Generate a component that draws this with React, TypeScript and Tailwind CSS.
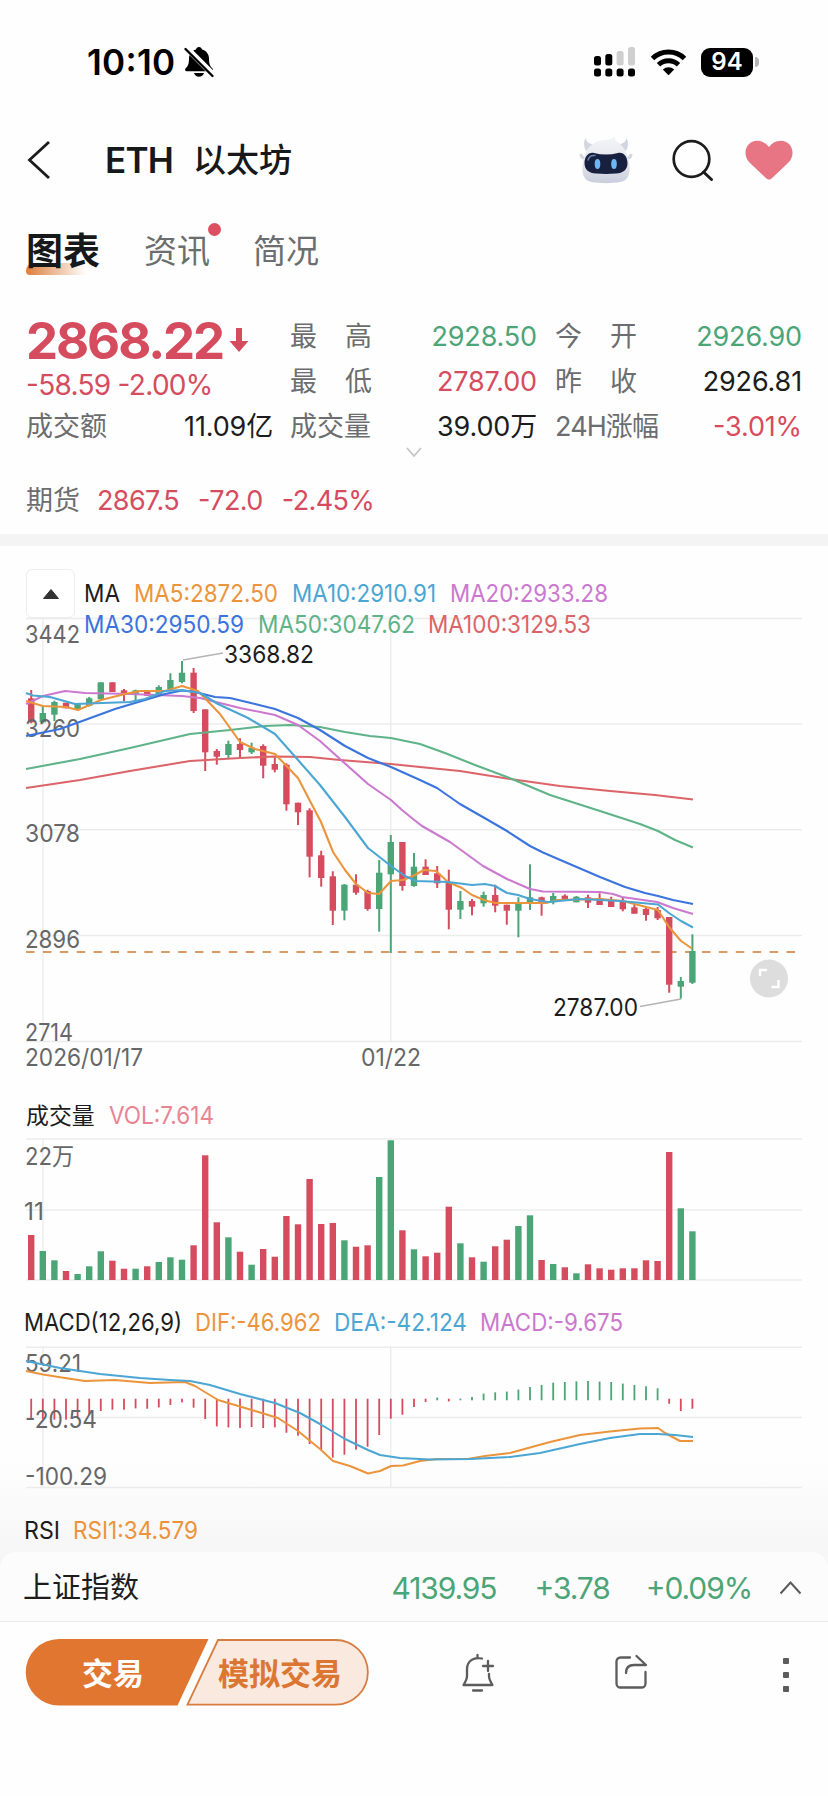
const RED = '#d64c5f';
const GREEN = '#4ba577';

// x of the i-th bar, shared by all three charts
const barX = (i: number) => 31.2 + i * 11.6;

// [rising, high, open/close top, open/close bottom, low]
const candles: [number, number, number, number, number][] = [
  [0, 690, 698.3, 722.3, 723.3],
  [1, 705.7, 713, 722.3, 723.3],
  [1, 700.7, 702, 714.7, 721],
  [0, 702.7, 702.7, 708.3, 708.3],
  [1, 704, 704, 710, 710],
  [1, 697, 698.3, 705.7, 706.5],
  [1, 682.3, 682.3, 699.3, 699.3],
  [0, 682.3, 682.3, 692, 692],
  [0, 689, 690.3, 694.7, 701.3],
  [1, 689.7, 690.3, 694.7, 700],
  [0, 691, 691, 695.7, 695.7],
  [1, 685.3, 687, 695.3, 696],
  [1, 673.3, 680, 689, 691],
  [1, 661, 672.7, 682, 683.3],
  [0, 668, 672.7, 711, 713],
  [0, 709.3, 709.3, 752.3, 771],
  [0, 749, 751, 756.7, 764.7],
  [1, 740.7, 744, 755, 759],
  [0, 738.3, 744, 750, 757.3],
  [1, 742.7, 747.7, 752.3, 754],
  [0, 744.3, 746, 765.7, 778.3],
  [0, 757.3, 764, 769.7, 772.3],
  [0, 763.3, 764.7, 804.3, 810.7],
  [0, 802.7, 802.7, 812.3, 825],
  [0, 808.3, 810.3, 856.7, 877.3],
  [0, 850.7, 855.3, 878, 886.7],
  [0, 871.3, 876.3, 910.7, 925],
  [1, 884, 884.7, 910.7, 920.3],
  [0, 874.3, 884.7, 892.7, 894.7],
  [0, 889.7, 891, 909, 910.7],
  [1, 860, 872.7, 909, 931.7],
  [1, 835, 842, 874.3, 953],
  [0, 842, 842, 886, 890.7],
  [1, 853, 866.7, 886, 886.7],
  [0, 859.3, 866.7, 875, 875],
  [0, 866, 873.3, 883.3, 888],
  [0, 869.7, 883, 909.7, 929.3],
  [1, 891, 901, 909.7, 919],
  [0, 899, 901, 906.7, 915.3],
  [1, 891.7, 895, 903.3, 906.7],
  [0, 884.7, 895, 905.7, 912.3],
  [0, 904.7, 904.7, 910.7, 924.7],
  [1, 897.3, 903.3, 910.7, 937.3],
  [1, 864.3, 897.3, 903.3, 910],
  [0, 896.7, 897.3, 902.7, 915.7],
  [1, 893, 896, 902.3, 904.3],
  [0, 894.3, 895.7, 899.7, 899.7],
  [1, 896, 896.7, 902.3, 902.3],
  [0, 894.7, 897.3, 902.7, 908],
  [0, 893.3, 898, 905, 905],
  [0, 896.7, 900.3, 907, 907],
  [0, 898, 901.7, 909.3, 911.3],
  [0, 905, 907.3, 913.7, 913.7],
  [0, 907, 909, 915, 920.7],
  [0, 907, 910, 918.3, 920],
  [0, 917, 917, 984.7, 992.7],
  [1, 977, 981, 986.7, 998.7],
  [1, 934.3, 951, 982.7, 984],
];

// bar heights in px
const volumes = [
  45, 29, 19.7, 9, 6, 13.7, 28.7, 19.3, 11.3, 11.3, 13.7, 18, 22.7, 20.3, 34.7, 124.7, 57.7, 42.7,
  28.3, 15.3, 31, 23.3, 64, 55.7, 101, 56, 57, 39.7, 33.3, 34.7, 103, 139.7, 49.7, 30.7, 23.7, 27.3,
  73.3, 36.7, 22.7, 18.3, 33.7, 40.3, 54, 64.7, 20, 16, 12.7, 6.7, 15.7, 11.7, 10.3, 11.7, 11.7,
  19.7, 19, 128, 71.7, 48.7,
];

const macd = [
  -20, -20.5, -21, -21, -19, -15.7, -12.3, -11, -11, -9.7, -10, -8.7, -6.3, -3.7, -9, -20.3, -27.7,
  -28.7, -29.3, -28.3, -29.3, -28.7, -34, -37, -45.3, -51.7, -59, -56, -51, -48, -36.3, -20, -16,
  -8.3, -3.3, 2.7, -2.7, 1.7, 3.3, 6.7, 8, 8.7, 10.7, 13.3, 15.3, 17.7, 18.3, 19, 19.3, 18.7, 18.3,
  16.7, 15.3, 14, 12, -5, -12.3, -10,
];

const averages = [
  {
    color: '#db6468',
    points:
      '26,788 80,780 130,771 190,761 240,758 275,756.5 310,757 340,760 391,764 420,767 460,771 510,779 560,786 610,791 655,795 693,799.5',
  },
  {
    color: '#5fb388',
    points:
      '26,769 80,759 130,748 190,734 230,730 265,726 290,725 320,727 345,732 370,736 391,738 420,744 445,753 475,765 512,779 550,795 600,811 640,824 658,831 675,840 693,847.5',
  },
  {
    color: '#cb78cf',
    points:
      '26,704 43,696 65,691 85,693 130,694 182,696 200,698 240,708 275,715 298,725 320,741 340,759 368,784 391,800 402,810 413,819 422,826 450,842 483,866 507,879 530,889 543,891.5 600,892 613,894 622,897 657,902 673,908 693,914',
  },
  {
    color: '#3b74dc',
    points:
      '26,736 60,729 85,720 115,709 145,700 165,694 182,690.5 195,692 215,697 230,698 255,704 275,709 298,718 320,730 345,746 368,758 391,767 420,780 437,788 460,804 488,820 507,831 530,846 543,852.5 565,862 600,877 625,887 645,893 658,896 673,900 693,904',
  },
  {
    color: '#eb943c',
    points:
      '26,701 42.7,706 66,707 78,710 101,700 125,694 140,691 165,691 182,686 198,691 220,714 240,742 255,749 275,754 298,778 321,822 333,852 345,870 356,884 368,893 379,894 391,881 403,880 413,876 424,870 436,871 448,882 462,888 472,895 484,900 495,903 546,903 558,900 600,899 623,901 646,907 658,910 669,927 681,941 692,948.5',
  },
  {
    color: '#4ba6d3',
    points:
      '26,693 33,695.5 50,697 75,704 130,702 145,699 165,691 182,690 200,693 218,704 248,718 275,734 298,760 320,785 345,817 368,848 391,866 405,876 416,881 448,882 472,885 485,884 495,886 507,893 518,895 530,899 548,902 580,899 620,901 658,904.5 669,913 681,921 693,927.5',
  },
];

const difPoints =
  '26,1371 43,1374.5 65,1378 85,1381 115,1380 150,1383 185,1382 195,1386 218,1400 235,1405 255,1411 278,1418 298,1431 320,1449 333,1461 350,1466 368,1473.5 380,1471 391,1466 403,1465.5 420,1461 437,1459 468,1459 485,1456 510,1453 550,1442 580,1435 610,1431.5 640,1428.5 658,1428 665,1433 680,1441 693,1441';
const deaPoints =
  '26,1361 60,1368 100,1374 140,1378 170,1380 190,1381 210,1385 240,1394 275,1403 300,1413 320,1424 345,1439 368,1450 380,1455 400,1458 430,1459.5 470,1459 510,1457 540,1453 580,1444 610,1438 640,1434 658,1434 675,1435 693,1437';

function Grid({ rows, top, bottom }: { rows: number[]; top: number; bottom: number }) {
  return (
    <g stroke="#ececec" strokeWidth="1.4">
      {rows.map((y) => (
        <line key={y} x1="26" x2="802" y1={y} y2={y} />
      ))}
      <line x1="43" x2="43" y1={top} y2={bottom} />
      <line x1="390.7" x2="390.7" y1={top} y2={bottom} />
    </g>
  );
}

type LabelProps = { x: number; y: number; w: number; color?: string; children: string };

function Label({ x, y, w, color = '#666769', children }: LabelProps) {
  return (
    <text x={x} y={y} textLength={w} lengthAdjust="spacingAndGlyphs" fontSize="24" fill={color}>
      {children}
    </text>
  );
}

function StatusBar() {
  return (
    <div className="flex h-[100px] items-center pt-6 pl-[87px] pr-[69px]">
      <span className="text-[35px] leading-none font-semibold tracking-[0.3px] text-black">10:10</span>
      <svg className="ml-[8px]" width="32" height="32" viewBox="0 0 32 32">
        <path
          d="M16 1c1.6 0 2.7 1 3 2.4 4.500 1.200 7 4.800 7 9.200 0 5.700 1.200 7.700 3.300 9.700 1.200 1.200.6 3-1 3H3.700c-1.600 0-2.200-1.800-1-3C4.800 20.300 6 18.300 6 12.600c0-4.400 2.500-8 7-9.200C13.300 2 14.400 1 16 1zM11 27h10c-.6 2.400-2.600 3.800-5 3.800S11.600 29.400 11 27z"
          fill="#000"
        />
        <path d="M3 1.500l27.500 27.500" stroke="#fff" strokeWidth="6" />
        <path d="M2.500 3l27 27" stroke="#000" strokeWidth="2.400" strokeLinecap="round" />
      </svg>
      <svg className="ml-auto" width="42" height="30" viewBox="0 0 42 30">
        <g fill="#000">
          <rect x="0" y="9" width="7" height="9.500" rx="2.500" />
          <rect x="11.300" y="7" width="7" height="11.500" rx="2.500" />
          {[0, 11.3, 22.6, 34].map((x) => (
            <rect key={x} x={x} y="21.500" width="7" height="8" rx="2.500" />
          ))}
        </g>
        <rect x="22.600" y="4" width="7" height="14.500" rx="2.500" fill="#cfcfcf" />
        <rect x="34" y="0" width="7" height="18.500" rx="2.500" fill="#cfcfcf" />
      </svg>
      <svg className="ml-[14px]" width="37" height="28" viewBox="0 0 37 28">
        <g fill="none" stroke="#000" strokeWidth="5">
          <path d="M2.500 10.500a23 23 0 0 1 32 0" />
          <path d="M8.500 16.800a14.500 14.500 0 0 1 20 0" />
        </g>
        <path d="M12.800 21.500a8.500 8.500 0 0 1 11.400 0L18.500 27.300z" fill="#000" />
      </svg>
      <div className="ml-[14px] flex items-center">
        <div className="flex h-[29px] w-[52px] items-center justify-center rounded-[9px] bg-black text-[24px] leading-none font-semibold text-white">
          94
        </div>
        <div className="ml-0.5 h-[10px] w-1 rounded-r-full bg-[#b5b5b5]" />
      </div>
    </div>
  );
}

function Robot() {
  return (
    <svg width="54" height="48" viewBox="0 0 54 48">
      <defs>
        <linearGradient id="shell" x1="0" y1="0" x2="0" y2="1">
          <stop offset="0" stopColor="#f4f5f8" />
          <stop offset=".6" stopColor="#e3e5ec" />
          <stop offset="1" stopColor="#c9cddd" />
        </linearGradient>
      </defs>
      <path d="M7 15C4.500 10 4.500 6 6.500 2c1 4 3 5.500 8 6.500zM47 15c2.500-5 2.500-9 .5-13-1 4-3 5.500-8 6.500z" fill="#d3d6e0" />
      <path d="M2 18c0 3 1 4 4 4M52 18c0 3-1 4-4 4" fill="none" stroke="#d4d7e0" strokeWidth="3" />
      <path
        d="M27 4c4-.5 7-1.500 9-4-.3 3 .3 4.500 1.800 5.800C45 10 49 18 50.500 30c.8 9-2 14.500-9 16-9 1.500-20 1.500-29 0C5.500 44.500 2.700 39 3.500 30 5 18 9 10 16 6.500 19 5 23 4 27 4z"
        fill="url(#shell)"
      />
      <path d="M15 17c8 2 16 2 24 0 5.500-1.300 9.500 4 9.500 10 0 7-4.500 10-11.500 10.600-7 .6-13 .6-20 0C10 37 5.500 34 5.500 27c0-6 4-11.300 9.500-10z" fill="#17203f" />
      <path d="M9 24c1-3.500 3.500-5 7-4.500" fill="none" stroke="#6b83ad" strokeWidth="1.500" strokeLinecap="round" />
      <ellipse cx="18.500" cy="28" rx="2.800" ry="5" fill="#6db7f5" />
      <ellipse cx="35" cy="28" rx="2.800" ry="5" fill="#6db7f5" />
    </svg>
  );
}

function Header() {
  return (
    <header className="flex h-[120px] items-center pl-[27px] pr-[35px]">
      <svg width="24" height="40" viewBox="0 0 24 40">
        <path d="M22 2L2.500 20 22 38" fill="none" stroke="#1c1c1c" strokeWidth="2.800" />
      </svg>
      <h1 className="ml-[54px] flex items-center text-[#17181a]">
        <span className="text-[35px] leading-none font-semibold tracking-[-0.8px]">ETH</span>
        <span className="ml-[20px] text-[33px] leading-none font-medium">以太坊</span>
      </h1>
      <div className="ml-auto flex items-center">
        <Robot />
        <svg className="ml-[39px]" width="42" height="43" viewBox="0 0 42 43">
          <circle cx="19.500" cy="20" r="17.800" fill="none" stroke="#1c1c1c" strokeWidth="2.700" />
          <path d="M31.500 33l8 7.500" stroke="#1c1c1c" strokeWidth="3" strokeLinecap="round" />
        </svg>
        <svg className="ml-[31px]" width="48" height="40" viewBox="0 0 48 40">
          <path
            d="M24 39.500c-1.300 0-2.300-.8-3.400-1.800L5 23C1.500 19.500.5 16 .5 12.500.5 6 5.500.8 12 .8c5 0 9 2.200 12 6.200 3-4 7-6.200 12-6.200 6.500 0 11.500 5.200 11.500 11.700 0 3.500-1 7-4.500 10.500L27.400 37.700c-1.100 1-2.100 1.800-3.400 1.800z"
            fill="#e87583"
          />
        </svg>
      </div>
    </header>
  );
}

function Tabs() {
  return (
    <nav className="flex h-[62px] items-center pl-[26px] text-[33px] leading-none text-[#6c6d6f]">
      <div className="relative">
        <div className="absolute -bottom-[5px] left-0 h-3 w-[60px] rounded-tl-lg rounded-bl-sm bg-gradient-to-r from-[#dd7e3c] to-transparent" />
        <span className="relative text-[37px] font-bold text-[#17181a]">图表</span>
      </div>
      <div className="relative ml-[44px]">
        资讯
        <div className="absolute -top-[12px] -right-[11px] size-[13px] rounded-full bg-[#dc4f60]" />
      </div>
      <span className="ml-[43px]">简况</span>
    </nav>
  );
}

function Stat({ label, value, tone, spread }: { label: string; value: string; tone: string; spread?: boolean }) {
  return (
    <div className="flex h-[45px] items-center justify-between">
      {spread ? (
        <span className="flex w-[82px] justify-between text-[#6c6d6f]">
          {label.split('').map((ch) => (
            <span key={ch}>{ch}</span>
          ))}
        </span>
      ) : (
        <span className={`text-[#6c6d6f] ${label.startsWith('24H') ? 'tracking-[-0.9px]' : ''}`}>{label}</span>
      )}
      <span className={`tracking-[-0.15px] ${tone}`}>{value}</span>
    </div>
  );
}

function Quote() {
  return (
    <section className="relative h-[252px] pt-[32px] pl-[26px] pr-[26px] text-[27px] leading-none whitespace-nowrap">
      <div className="flex">
        <div className="w-[247px]">
          <div className="flex h-[52px] items-center text-[#d64c5f]">
            <span className="text-[51px] font-bold tracking-[-2.1px]">2868.22</span>
            <svg className="ml-[6px]" width="20" height="26" viewBox="0 0 20 26">
              <path d="M7 1h6v13h6.500L10 25 .5 14H7z" fill="#d64c5f" />
            </svg>
          </div>
          <div className="flex h-[38px] items-center text-[28px] tracking-[-0.7px] text-[#d64c5f]">-58.59 -2.00%</div>
          <Stat label="成交额" value="11.09亿" tone="text-[#1c1c1c]" />
        </div>
        <div className="ml-[17px] w-[247px]">
          <Stat label="最高" value="2928.50" tone="text-[#4ba577]" spread />
          <Stat label="最低" value="2787.00" tone="text-[#d64c5f]" spread />
          <Stat label="成交量" value="39.00万" tone="text-[#1c1c1c]" />
        </div>
        <div className="ml-[18px] flex-1">
          <Stat label="今开" value="2926.90" tone="text-[#4ba577]" spread />
          <Stat label="昨收" value="2926.81" tone="text-[#1c1c1c]" spread />
          <Stat label="24H涨幅" value="-3.01%" tone="text-[#d64c5f]" />
        </div>
      </div>
      <svg className="mx-auto -mt-0.5 block" width="16" height="11" viewBox="0 0 16 11">
        <path d="M1 1l7 8 7-8" fill="none" stroke="#c4c4c4" strokeWidth="1.800" />
      </svg>
      <div className="mt-[29px] flex items-center tracking-[-0.6px] text-[#d64c5f]">
        <span className="tracking-normal text-[#6c6d6f]">期货</span>
        <span className="ml-[17px]">2867.5</span>
        <span className="ml-[19px]">-72.0</span>
        <span className="ml-[19px]">-2.45%</span>
      </div>
    </section>
  );
}

function PriceChart() {
  return (
    <section className="relative h-[534px]">
      <svg className="block" width="828" height="534" viewBox="0 546 828 534">
        <Grid rows={[618.5, 724, 829.7, 935.5, 1041.5]} top={618.5} bottom={1041.5} />
        <line x1="26" x2="802" y1="952" y2="952" stroke="#da9a63" strokeWidth="1.800" strokeDasharray="8.500 8.400" />
        {candles.map(([up, high, top, bottom, low], i) => (
          <g key={i} fill={up ? GREEN : RED}>
            <rect x={barX(i) - 1} y={high} width="2" height={low - high} />
            <rect x={barX(i) - 3.2} y={top} width="6.400" height={bottom - top} />
          </g>
        ))}
        <Label x={25} y={643} w={55}>3442</Label>
        <Label x={25} y={736.5} w={55}>3260</Label>
        <Label x={25} y={842} w={55}>3078</Label>
        <Label x={25} y={947.5} w={55}>2896</Label>
        <Label x={25} y={1041} w={48}>2714</Label>
        <Label x={25} y={1066} w={118}>2026/01/17</Label>
        <Label x={361} y={1066} w={60}>01/22</Label>
        {averages.map((line) => (
          <polyline key={line.color} points={line.points} fill="none" stroke={line.color} strokeWidth="2.100" strokeLinejoin="round" />
        ))}
        <path d="M183 660l40-7M640 1006.500l41-7.500" stroke="#b4b4b4" strokeWidth="1.500" />
        <Label x={224} y={662.5} w={90} color="#1c1c1c">3368.82</Label>
        <Label x={553} y={1015.5} w={85} color="#1c1c1c">2787.00</Label>
        <circle cx="769" cy="978.500" r="19" fill="#dddddd" />
        <path d="M760 976v-6h7M778.500 980v7h-7" fill="none" stroke="#fff" strokeWidth="2.400" />
      </svg>
      <div className="absolute top-[23px] left-[26px] flex size-[49px] items-center justify-center rounded-md border border-[#ededed] bg-white">
        <svg width="16" height="10" viewBox="0 0 16 10">
          <path d="M8 .5L15.500 9.500H.5z" fill="#333" stroke="#333" strokeLinejoin="round" />
        </svg>
      </div>
      <svg className="absolute top-[30px] left-0" width="828" height="64" viewBox="0 576 828 64">
        <Label x={84} y={602} w={36} color="#1c1c1c">MA</Label>
        <Label x={134} y={602} w={144} color="#eb943c">MA5:2872.50</Label>
        <Label x={292} y={602} w={144} color="#4ba6d3">MA10:2910.91</Label>
        <Label x={450} y={602} w={158} color="#cb78cf">MA20:2933.28</Label>
        <Label x={84} y={632.5} w={160} color="#3b74dc">MA30:2950.59</Label>
        <Label x={258} y={632.5} w={157} color="#5fb388">MA50:3047.62</Label>
        <Label x={428} y={632.5} w={163} color="#db6468">MA100:3129.53</Label>
      </svg>
    </section>
  );
}

function VolumeChart() {
  return (
    <section>
      <svg className="block" width="828" height="220" viewBox="0 1080 828 220">
        <text x="26" y="1123.500" fontSize="22.900" fill="#1c1c1c">成交量</text>
        <Label x={109} y={1123.5} w={105} color="#e88592">VOL:7.614</Label>
        <Grid rows={[1139, 1210, 1280]} top={1139} bottom={1280} />
        <Label x={25} y={1164.5} w={49}>22万</Label>
        <Label x={24} y={1220} w={20}>11</Label>
        {volumes.map((h, i) => (
          <rect key={i} x={barX(i) - 3.2} y={1280 - h} width="6.400" height={h} fill={candles[i][0] ? GREEN : RED} />
        ))}
      </svg>
    </section>
  );
}

function MacdChart() {
  return (
    <section>
      <svg className="block" width="828" height="252" viewBox="0 1300 828 252">
        <defs>
          <linearGradient id="fade" x1="0" y1="0" x2="0" y2="1">
            <stop offset="0" stopColor="#fefefe" />
            <stop offset="1" stopColor="#f6f6f6" />
          </linearGradient>
        </defs>
        <rect x="0" y="1460" width="828" height="92" fill="url(#fade)" />
        <Label x={24} y={1331} w={158} color="#1c1c1c">MACD(12,26,9)</Label>
        <Label x={195} y={1331} w={126} color="#eb943c">DIF:-46.962</Label>
        <Label x={334} y={1331} w={133} color="#4ba6d3">DEA:-42.124</Label>
        <Label x={480} y={1331} w={143} color="#cb78cf">MACD:-9.675</Label>
        <Grid rows={[1347.3, 1417.5, 1487.5]} top={1347.3} bottom={1487.5} />
        {macd.map((v, i) => (
          <rect
            key={i}
            x={barX(i) - 0.9}
            y={v < 0 ? 1398.7 : 1400.3 - v}
            width="1.800"
            height={Math.abs(v)}
            fill={v < 0 ? RED : GREEN}
          />
        ))}
        <Label x={25} y={1371.5} w={56}>59.21</Label>
        <Label x={25} y={1428} w={72}>-20.54</Label>
        <Label x={25} y={1484.5} w={82}>-100.29</Label>
        <polyline points={difPoints} fill="none" stroke="#eb943c" strokeWidth="2" strokeLinejoin="round" />
        <polyline points={deaPoints} fill="none" stroke="#4ba6d3" strokeWidth="2" strokeLinejoin="round" />
        <Label x={24} y={1538.5} w={36} color="#1c1c1c">RSI</Label>
        <Label x={73} y={1538.5} w={125} color="#eb943c">RSI1:34.579</Label>
      </svg>
    </section>
  );
}

function IndexBar() {
  return (
    <div className="bg-[#f6f6f6]">
      <div className="flex h-[70px] items-center rounded-t-2xl border-b-[1.5px] border-[#e9ebeb] bg-[#fdfcfc] pt-0.5 pl-[23px] pr-[26px] text-[29px] leading-none">
        <span className="text-[#1c1c1c]">上证指数</span>
        <div className="ml-auto flex items-center text-[30px] tracking-[-1.1px] text-[#4ba577]">
          <span>4139.95</span>
          <span className="ml-[38px]">+3.78</span>
          <span className="ml-[36px]">+0.09%</span>
        </div>
        <svg className="ml-[27px]" width="23" height="15" viewBox="0 0 23 15">
          <path d="M1.500 13.500l10-11 10 11" fill="none" stroke="#5a5a5a" strokeWidth="2" />
        </svg>
      </div>
    </div>
  );
}

function BottomBar() {
  return (
    <footer className="flex h-[174px] items-start pt-[16px] pl-[25px] pr-[39px]">
      <div className="relative h-[68px] w-[344px] text-[31px] leading-none font-bold">
        <svg className="block" width="344" height="68" viewBox="0 0 344 68">
          <path d="M34 1h149.500l-31 66.500H34A33.200 33.200 0 0 1 34 1z" fill="#e17631" />
          <path d="M193 2h117.500a32.300 32.300 0 0 1 0 64.700H162.500z" fill="#fae9df" stroke="#d87d42" strokeWidth="1.800" />
        </svg>
        <span className="absolute top-[20px] left-[57px] text-white">交易</span>
        <span className="absolute top-[20px] left-[193px] text-[#db7633]">模拟交易</span>
      </div>
      <svg className="mt-[15px] ml-[92px]" width="34" height="40" viewBox="0 0 34 40" fill="none" stroke="#5c5c5c" strokeWidth="2.300" strokeLinecap="round" strokeLinejoin="round">
        <path d="M16.500 2v3M21 5.500C12.500 3.500 6 8.500 6 16v7c0 3-1 5-3.500 9h29c-2.500-4-3.500-6-3.500-9v-2" />
        <path d="M27 8v10M22 13h10M12 37.500h9" />
      </svg>
      <svg className="mt-[16px] ml-[119px]" width="34" height="37" viewBox="0 0 34 37" fill="none" stroke="#5c5c5c" strokeWidth="2.300" strokeLinecap="round" strokeLinejoin="round">
        <path d="M16 3.500H6.500A4 4 0 0 0 2.500 7.500v22a4 4 0 0 0 4 4h21a4 4 0 0 0 4-4V18" />
        <path d="M22.500 2l9.500 9H20c-5 0-8 3-8 8" />
      </svg>
      <div className="mt-[20px] ml-auto flex flex-col gap-2">
        <div className="size-[6px] rounded-[1px] bg-[#5c5c5c]" />
        <div className="size-[6px] rounded-[1px] bg-[#5c5c5c]" />
        <div className="size-[6px] rounded-[1px] bg-[#5c5c5c]" />
      </div>
    </footer>
  );
}

export default function App() {
  return (
    <div className="h-[1796px] w-[828px] overflow-hidden bg-[#fefefe] font-['Inter','Noto_Sans_CJK_SC',sans-serif] [font-feature-settings:'case']">
      <StatusBar />
      <Header />
      <Tabs />
      <Quote />
      <div className="h-3 bg-[#f4f4f4]" />
      <PriceChart />
      <VolumeChart />
      <MacdChart />
      <IndexBar />
      <BottomBar />
    </div>
  );
}
